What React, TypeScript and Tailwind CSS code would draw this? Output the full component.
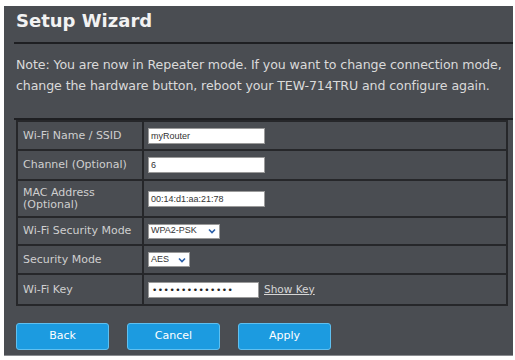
const rows = [
  { label: "Wi-Fi Name / SSID", h: "h-[29px]" },
  { label: "Channel (Optional)", h: "h-[30px]" },
  { label: "MAC Address\n(Optional)", h: "h-[37px]" },
  { label: "Wi-Fi Security Mode", h: "h-[28px]" },
  { label: "Security Mode", h: "h-[29px]" },
  { label: "Wi-Fi Key", h: "h-[31px]" },
];

function TextBox({ value, w = "w-[117px]" }: { value: string; w?: string }) {
  return (
    <div
      className={`${w} h-[16px] bg-white border border-[#9a9a9a] px-[2px] text-[9px] leading-[14px] text-[#333] font-['Liberation_Sans',sans-serif]`}
    >
      {value}
    </div>
  );
}

function Select({ value, w }: { value: string; w: string }) {
  return (
    <div
      className={`${w} h-[15px] bg-white border border-[#9a9a9a] pl-[2px] pr-[3px] flex items-center justify-between text-[9px] text-[#333] font-['Liberation_Sans',sans-serif]`}
    >
      <span>{value}</span>
      <svg width="8" height="6" viewBox="0 0 8 6">
        <path d="M1 1.5 L4 4.5 L7 1.5" stroke="#2a5fa8" strokeWidth="1.6" fill="none" />
      </svg>
    </div>
  );
}

function Btn({ children }: { children: string }) {
  return (
    <button className="w-[93px] h-[27px] rounded-[3px] bg-[#1c9be0] border border-[#5fc0f0] text-white text-[11px] font-['DejaVu_Sans',sans-serif]">
      {children}
    </button>
  );
}

export default function App() {
  const fields = [
    <TextBox value="myRouter" />,
    <TextBox value="6" />,
    <TextBox value="00:14:d1:aa:21:78" />,
    <Select value="WPA2-PSK" w="w-[72px]" />,
    <Select value="AES" w="w-[42px]" />,
    <div className="flex items-center gap-[5px]">
      <div className="w-[111px] h-[16px] bg-white border border-[#9a9a9a] px-[3px] text-[9px] leading-[14px] tracking-[0.5px] text-[#222]">
        ••••••••••••••
      </div>
      <span className="text-[10.5px] text-[#d6d6d6] underline">Show Key</span>
    </div>,
  ];

  return (
    <div className="w-[515px] h-[360px] bg-white pt-[6px] pl-[4px] font-['DejaVu_Sans',sans-serif]">
      <div className="w-[509px] h-[350px] bg-[#4a4d52] border-b border-[#8a8c90] pt-[3px]">
        <h1 className="pl-[12px] text-[18px] font-bold text-[#f2f2f2] leading-[24px]">
          Setup Wizard
        </h1>
        <div className="ml-[10px] mt-[9px] border-t-2 border-[#1e1f22]" />
        <p className="pl-[12px] mt-[10px] text-[12.6px] leading-[21px] text-[#dadada] tracking-[-0.1px] whitespace-nowrap">
          Note: You are now in Repeater mode. If you want to change connection mode,
          <br />
          change the hardware button, reboot your TEW-714TRU and configure again.
        </p>
        <div className="ml-[10px] mt-[22px] border-t-2 border-[#1e1f22]" />
        <table className="ml-[12px] w-[492px] border-collapse border-2 border-[#26272a]">
          <tbody>
            {rows.map((r, i) => (
              <tr key={r.label} className={`${r.h} border-b-2 border-[#26272a]`}>
                <td className="w-[126px] pl-[5px] border-r-2 border-[#26272a] text-[11px] leading-[12px] text-[#cfcfcf] whitespace-pre-line">
                  {r.label}
                </td>
                <td className="pl-[4px]">{fields[i]}</td>
              </tr>
            ))}
          </tbody>
        </table>
        <div className="ml-[12px] mt-[17px] flex gap-[18px]">
          <Btn>Back</Btn>
          <Btn>Cancel</Btn>
          <Btn>Apply</Btn>
        </div>
      </div>
    </div>
  );
}
